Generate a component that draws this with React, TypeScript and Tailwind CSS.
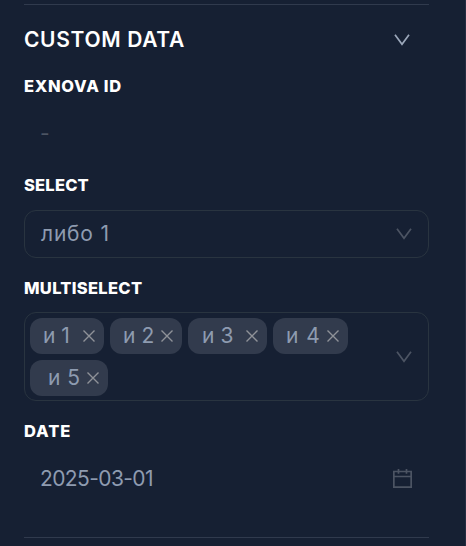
import React from "react";

function Chevron({ className }: { className: string }) {
  return (
    <svg className={className} width="16" height="12" viewBox="0 0 16 12" fill="none" stroke="currentColor" strokeWidth="1.7">
      <path d="M1 0.8 L8 10.3 L15 0.8" />
    </svg>
  );
}

function Close() {
  return (
    <svg className="shrink-0 text-[#8f9298]" width="12" height="12" viewBox="0 0 12 12" fill="none" stroke="currentColor" strokeWidth="1.4">
      <path d="M0.5 0.5 L11.5 11.5 M11.5 0.5 L0.5 11.5" />
    </svg>
  );
}

function Calendar() {
  return (
    <svg className="mb-px text-[#4c5463]" width="19" height="19" viewBox="0 0 19 19" fill="none" stroke="currentColor" strokeWidth="1.7">
      <path d="M0.85 2.5 H18.15 V18.1 H0.85 Z M1 7.5 H18 M5.5 0 V4.7 M13.5 0 V4.7" />
    </svg>
  );
}

function Label({ text, className }: { text: string; className: string }) {
  return <div className={`h-5 whitespace-nowrap text-[16.5px] leading-5 font-extrabold text-white ${className}`}>{text}</div>;
}

const tags = [
  { n: "1", box: "w-[74px] pl-[13px]", tracking: "tracking-[-0.1px]" },
  { n: "2", box: "w-[72px] pl-[13px]", tracking: "tracking-[0.1px]" },
  { n: "3", box: "w-[79px] pl-[14px]", tracking: "tracking-[0.1px]" },
  { n: "4", box: "w-[75px] pl-[13px]", tracking: "tracking-[0.9px]" },
  { n: "5", box: "w-[78px] pl-[18px]", tracking: "tracking-[0.5px]" },
];

export default function App() {
  return (
    <div className="h-[546px] w-[466px] overflow-hidden bg-[#162033] pt-1 pr-[37px] pl-6 font-['Inter','Noto_Sans',sans-serif] text-[#8e9bb0] shadow-[inset_-1px_0_0_#252d42]">
      <section className="h-[534px] border-y border-[#303a4d]">
        <header className="flex h-[70px] items-center justify-between pr-[19px]">
          <h1 className="text-[21px] leading-7 font-semibold tracking-[0.65px] whitespace-nowrap text-white">CUSTOM DATA</h1>
          <Chevron className="text-[#9ba7ba]" />
        </header>
        <Label text="EXNOVA ID" className="mt-[1px] tracking-[0.7px]" />
        <div className="flex h-[79px] items-center pb-1 pl-4 text-[21px] text-[#4c5463]">-</div>
        <Label text="SELECT" className="tracking-[0.2px]" />
        <div className="mt-[15px] flex h-12 items-center justify-between rounded-xl border border-[#293440] pr-4 pl-4">
          <span className="text-[21px] leading-7 tracking-[0.8px]">либо 1</span>
          <Chevron className="mb-px text-[#4c5463]" />
        </div>
        <Label text="MULTISELECT" className="mt-5 tracking-[0.3px]" />
        <div className="mt-[14px] flex h-[89px] items-center justify-between rounded-xl border border-[#293440] pr-4 pl-[5px]">
          <div className="flex w-[330px] flex-wrap gap-1.5">
            {tags.map((t) => (
              <span key={t.n} className={`flex h-9 items-center justify-between rounded-xl bg-[#323b4d] pr-[9px] ${t.box}`}>
                <span className={`text-[21px] leading-7 whitespace-nowrap ${t.tracking}`}>и {t.n}</span>
                <Close />
              </span>
            ))}
          </div>
          <Chevron className="text-[#4c5463]" />
        </div>
        <Label text="DATE" className="mt-5 tracking-[0.9px]" />
        <div className="mt-[14px] flex h-12 items-center justify-between pr-[17px] pl-4">
          <span className="text-[21px] leading-7 tracking-[-0.6px]">2025-03-01</span>
          <Calendar />
        </div>
      </section>
    </div>
  );
}
